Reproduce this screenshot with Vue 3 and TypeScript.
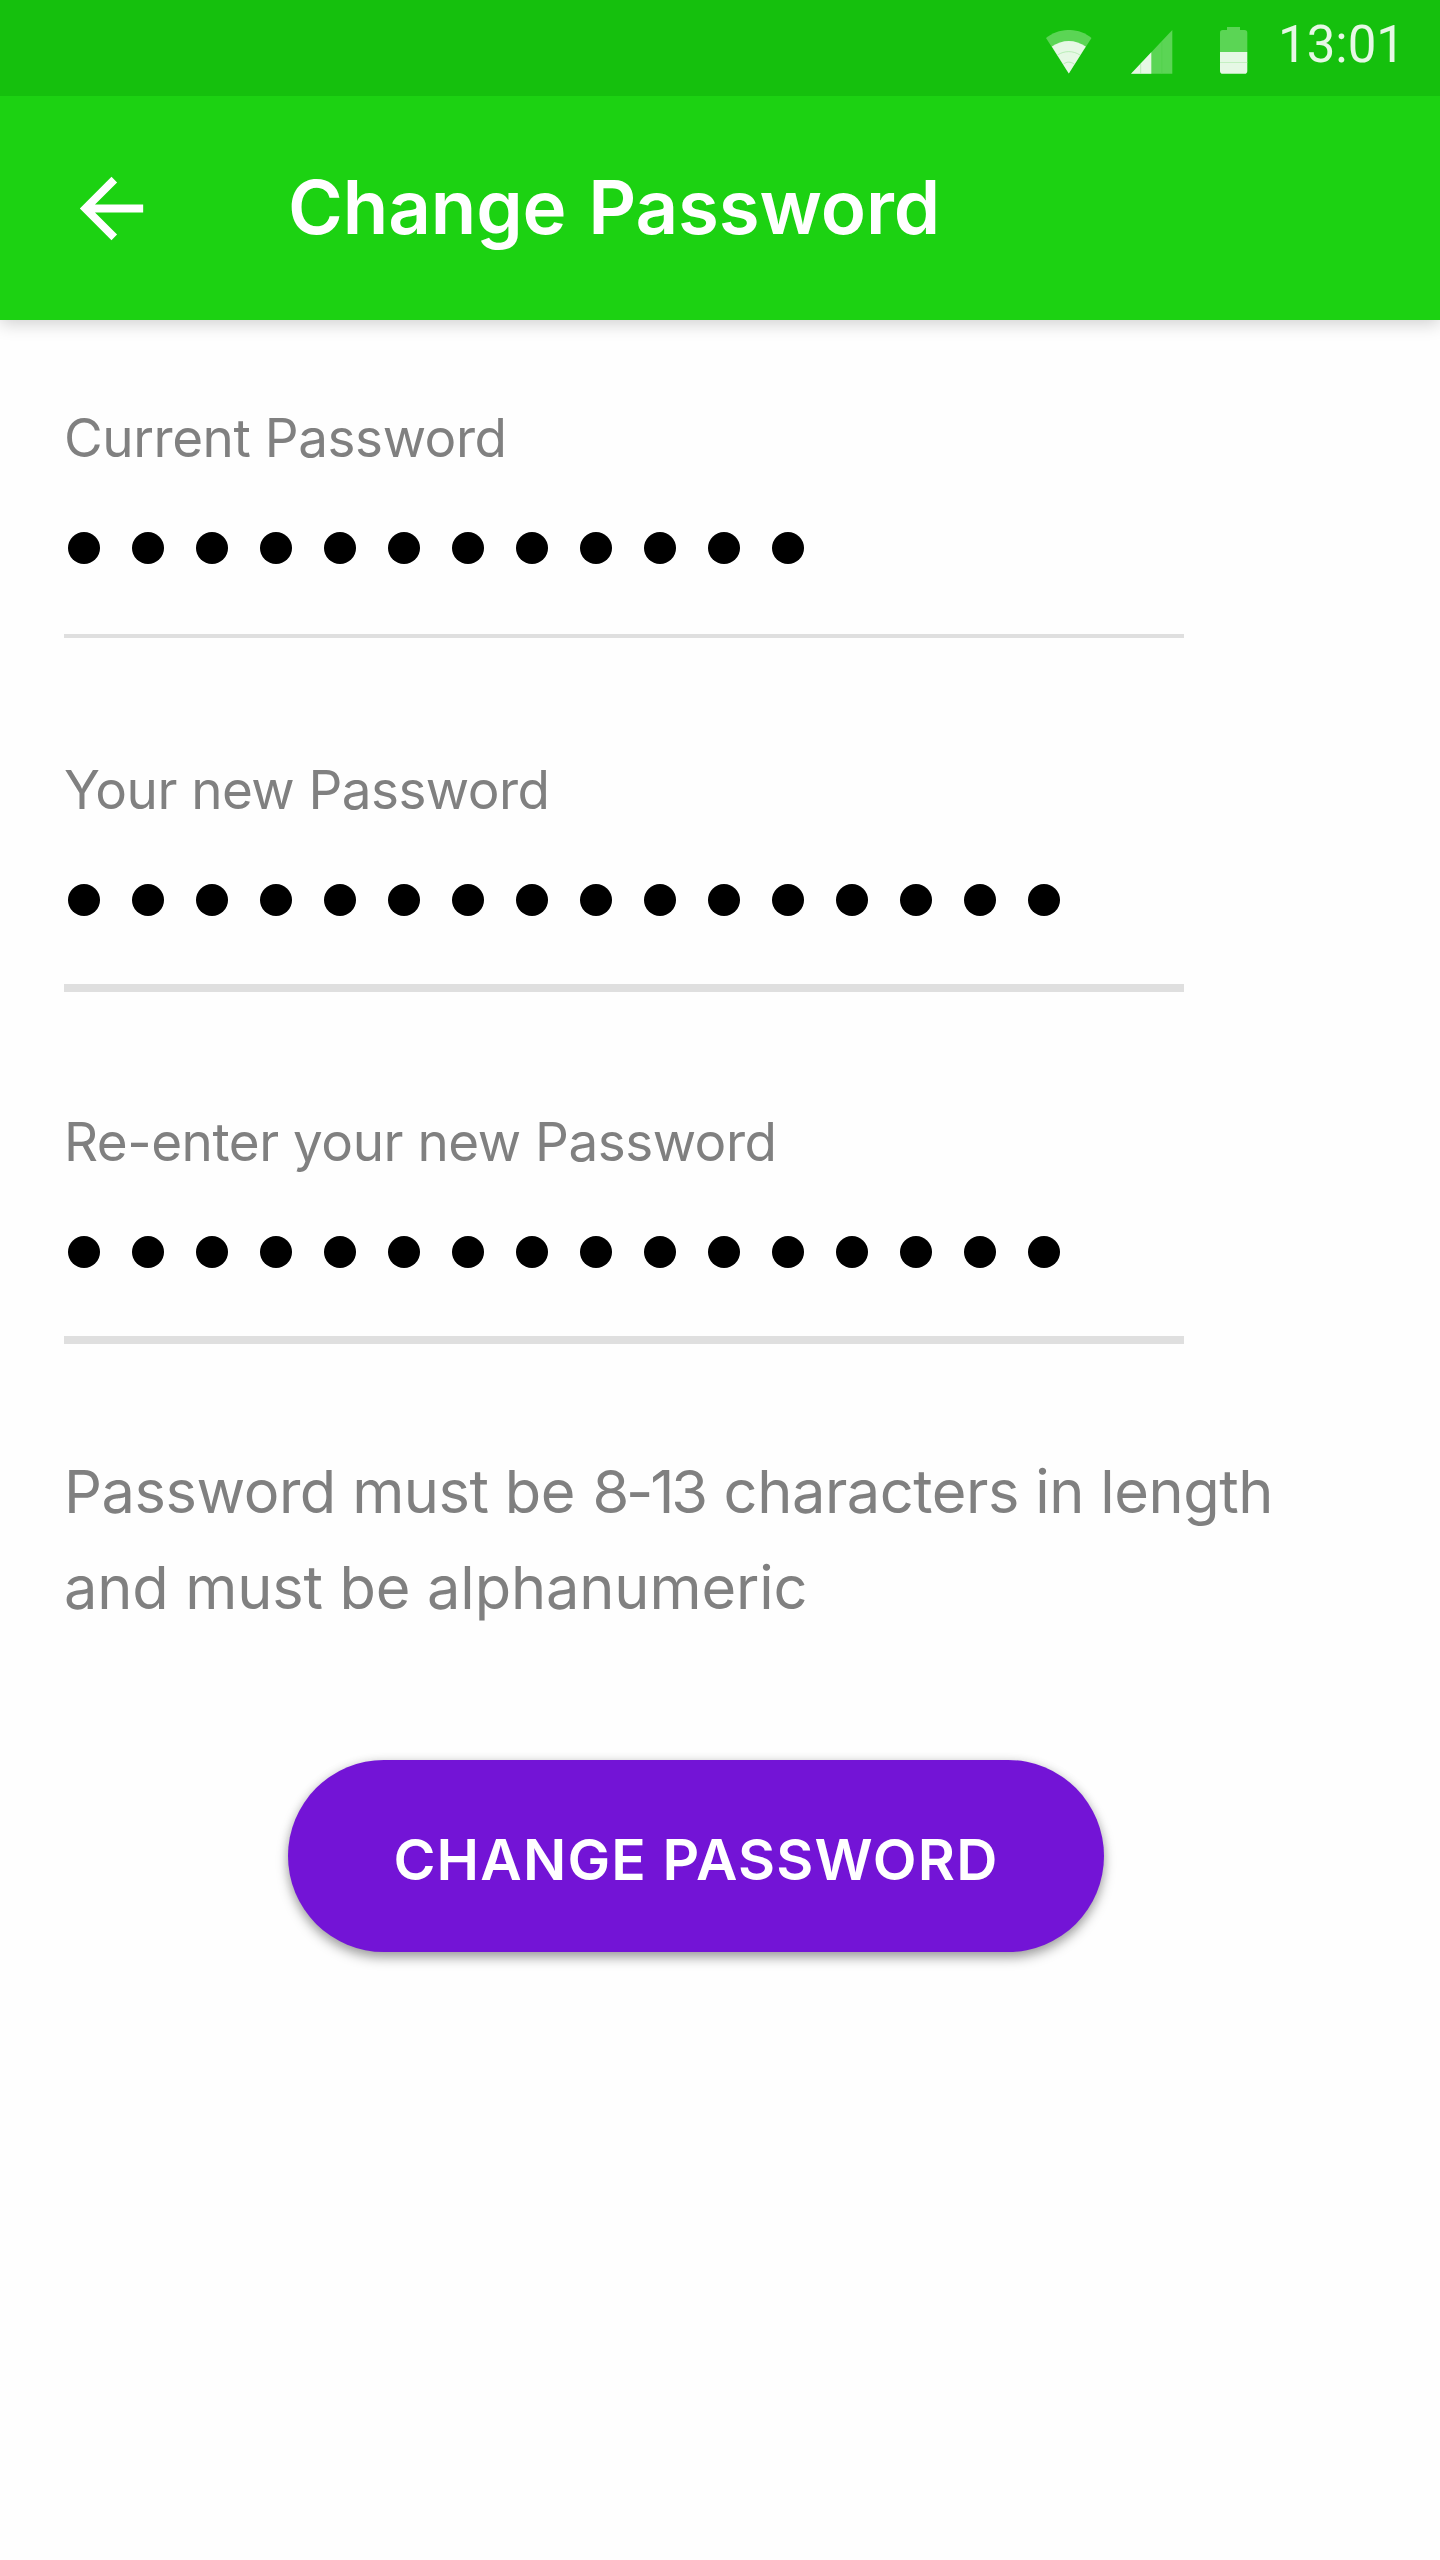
<script setup lang="ts">
interface Field {
  id: string
  label: string
  length: number
  thick: boolean
  spacing: number
}

const fields: Field[] = [
  { id: 'current', label: 'Current Password', length: 12, thick: false, spacing: -0.44 },
  { id: 'new', label: 'Your new Password', length: 16, thick: true, spacing: -0.55 },
  { id: 'confirm', label: 'Re-enter your new Password', length: 16, thick: true, spacing: -0.48 },
]
</script>

<template>
  <div class="screen">
    <div class="status-bar">
      <svg class="wifi" width="46" height="44" viewBox="0 0 46 44">
        <path d="M0 8C13-2.700 33-2.700 45.500 8L22.800 43.500Z" fill="#5bd555" />
        <path d="M5.800 16.500C16 9 29.500 9 39.800 16.500L22.800 43.500Z" fill="#e6f8e5" />
        <path d="M11.500 25C18.500 20.500 27 20.500 34 25M17.500 34C21 31.500 24.500 31.500 28 34" fill="none" stroke="#a6e8a3" stroke-width=".7" />
      </svg>
      <svg class="signal" width="42" height="44" viewBox="0 0 42 44">
        <path d="M0 43.700L41.300 0V43.700Z" fill="#5bd555" />
        <path d="M0 43.700L20.300 22.200V43.700Z" fill="#e6f8e5" />
        <path d="M9.700 34V43.700" stroke="#a6e8a3" stroke-width=".7" />
        <path d="M30.700 12V43.700" stroke="#52d14b" stroke-width=".7" />
      </svg>
      <svg class="battery" width="28" height="47" viewBox="0 0 28 47">
        <path d="M7 0H20V3H24.500Q27.300 3 27.300 5.800V25H0V5.800Q0 3 2.800 3H7Z" fill="#5bd555" />
        <path d="M0 25H27.300V43.900Q27.300 46.700 24.500 46.700H2.800Q0 46.700 0 43.900Z" fill="#e6f8e5" />
        <path d="M0 35.500H27.300" stroke="#b5ecb2" stroke-width=".7" />
      </svg>
      <span class="clock">13:01</span>
    </div>

    <header class="app-bar">
      <svg class="back" width="95" height="95" viewBox="0 0 24 24">
        <path d="M20 11H7.830l5.590-5.590L12 4l-8 8 8 8 1.410-1.410L7.830 13H20v-2z" fill="#fff" />
      </svg>
      <h1 class="title">Change Password</h1>
    </header>

    <main class="content">
      <div v-for="field in fields" :key="field.id" class="field">
        <div class="label" :style="{ letterSpacing: field.spacing + 'px' }">{{ field.label }}</div>
        <div class="dots">
          <i v-for="n in field.length" :key="n" class="dot"></i>
        </div>
        <div class="rule" :class="{ thick: field.thick }"></div>
      </div>

      <p class="hint">
        <span class="hint-line first">Password must be <span class="range">8-13</span> characters in length</span>
        <span class="hint-line second">and must be alphanumeric</span>
      </p>

      <button class="submit" type="button">CHANGE PASSWORD</button>
    </main>
  </div>
</template>

<style>
body {
  margin: 0;
  background: #fefefe;
}
</style>

<style scoped>
.screen {
  width: 1440px;
  height: 2560px;
  overflow: hidden;
  background: #fefefe;
  font-family: Inter, 'Open Sans', sans-serif;
}

.status-bar {
  position: relative;
  z-index: 1;
  display: flex;
  align-items: flex-start;
  box-sizing: border-box;
  height: 96px;
  padding: 27px 0 0 1046px;
  background: #15c00d;
}

.status-bar svg {
  display: block;
  flex: none;
}

.wifi {
  margin-top: 3px;
}

.signal {
  margin: 3px 0 0 39px;
}

.battery {
  margin-left: 47px;
}

.clock {
  margin: -12px 0 0 30px;
  font-family: Roboto, sans-serif;
  font-size: 51px;
  line-height: 60px;
  color: #e6f8e5;
}

.app-bar {
  display: flex;
  align-items: center;
  box-sizing: border-box;
  height: 224px;
  padding-left: 64px;
  background: #1cd212;
  box-shadow: 0 4px 16px rgba(0, 0, 0, 0.18);
}

.back {
  display: block;
  flex: none;
}

.title {
  margin: 0 0 2px 129px;
  font-size: 74.4px;
  font-weight: 600;
  line-height: 96px;
  letter-spacing: -0.1px;
  word-spacing: 3px;
  white-space: nowrap;
  color: #fff;
}

.content {
  padding: 85px 64px 0;
}

.field {
  width: 1120px;
  height: 352px;
}

.label {
  box-sizing: border-box;
  height: 64px;
  padding-top: 0.5px;
  font-size: 53px;
  line-height: 64px;
  white-space: nowrap;
  color: #808080;
}

.dots {
  display: flex;
  gap: 32px;
  padding: 63px 0 0 4px;
}

.dot {
  width: 32px;
  height: 32px;
  border-radius: 50%;
  background: #000;
}

.rule {
  height: 4px;
  margin-top: 70px;
  background: #dfdfdf;
}

.rule.thick {
  height: 8px;
  margin-top: 68px;
}

.hint {
  margin: -18px 0 0;
  font-size: 59.5px;
  line-height: 96px;
  white-space: nowrap;
  color: #808080;
}

.hint-line {
  display: block;
}

.hint-line.first {
  letter-spacing: -0.44px;
}

.hint-line.second {
  letter-spacing: -0.12px;
}

.range {
  margin: 0 2.6px 0 1px;
  letter-spacing: -3.2px;
}

.submit {
  display: block;
  box-sizing: border-box;
  width: 816px;
  height: 192px;
  margin: 125px 0 0 224px;
  padding: 7px 0 0;
  border: 0;
  border-radius: 96px;
  background: #7314d6;
  box-shadow: 0 6px 12px rgba(0, 0, 0, 0.34), 0 0 10px rgba(0, 0, 0, 0.1);
  font-family: inherit;
  font-size: 57px;
  font-weight: 600;
  letter-spacing: 1.18px;
  white-space: nowrap;
  color: #fff;
}
</style>
